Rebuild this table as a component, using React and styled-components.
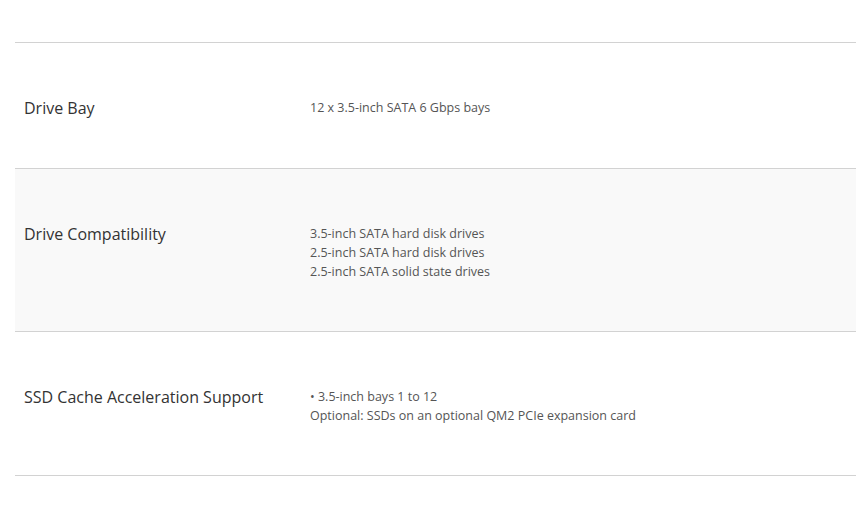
import React from "react";
import styled, { createGlobalStyle } from "styled-components";

const Global = createGlobalStyle`
  html, body { margin: 0; padding: 0; background: #fff; }
  body { font-family: "Open Sans", "Liberation Sans", sans-serif; }
`;

const Page = styled.div`
  padding: 42px 11px 0 15px;
`;

const Table = styled.div`
  display: flex;
  flex-direction: column;
  border-top: 1px solid #d2d2d2;
`;

const Row = styled.div`
  display: grid;
  grid-template-columns: 295px 1fr;
  padding: 55px 0 50px;
  border-bottom: 1px solid #d2d2d2;
  background: ${(p) => (p.$shaded ? "#f9f9f9" : "#fff")};
`;

const Label = styled.div`
  padding-left: 9px;
  font-size: 16px;
  line-height: 20px;
  color: #333;
`;

const Value = styled.div`
  font-size: 12.5px;
  line-height: 19px;
  color: #555;
`;

const rows = [
  { label: "Drive Bay", lines: ["12 x 3.5-inch SATA 6 Gbps bays"] },
  {
    label: "Drive Compatibility",
    lines: [
      "3.5-inch SATA hard disk drives",
      "2.5-inch SATA hard disk drives",
      "2.5-inch SATA solid state drives",
    ],
  },
  {
    label: "SSD Cache Acceleration Support",
    lines: ["• 3.5-inch bays 1 to 12", "Optional: SSDs on an optional QM2 PCIe expansion card"],
  },
];

export default function App() {
  return (
    <>
      <Global />
      <Page>
        <Table>
          {rows.map((r, i) => (
            <Row key={r.label} $shaded={i === 1}>
              <Label>{r.label}</Label>
              <Value>
                {r.lines.map((l) => (
                  <div key={l}>{l}</div>
                ))}
              </Value>
            </Row>
          ))}
        </Table>
      </Page>
    </>
  );
}
